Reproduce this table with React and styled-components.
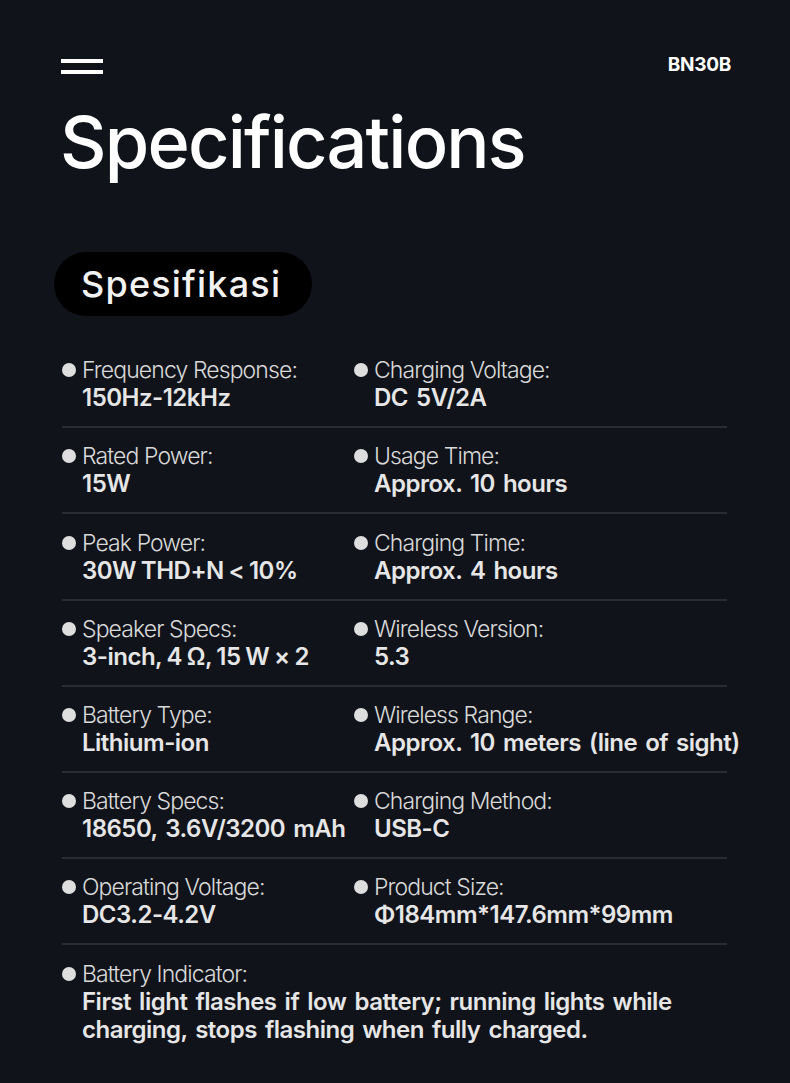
import styled, { createGlobalStyle } from 'styled-components';

const GlobalStyle = createGlobalStyle`
    html, body {
        margin: 0;
        padding: 0;
        background: #10131a;
    }
    * {
        box-sizing: border-box;
    }
`

const Page = styled.div`
    width: 790px;
    min-height: 1083px;
    background: #10131a;
    padding: 59px 59px 0 61px;
    font-family: Inter, "Liberation Sans", sans-serif;
    color: #e4e4e4;
`

const Header = styled.div`
    display: flex;
    align-items: flex-start;
    justify-content: space-between;
    height: 15px;
`

const Burger = styled.div`
    display: flex;
    flex-direction: column;
    gap: 7px;
    width: 42px;

    span {
        display: block;
        height: 4px;
        background: #fff;
    }
`

const Model = styled.div`
    font-size: 19px;
    font-weight: 700;
    color: #fff;
    line-height: 12px;
    letter-spacing: -0.3px;
`

const Title = styled.h1`
    margin: 26px 0 0 -1px;
    font-size: 72px;
    font-weight: 500;
    line-height: 84px;
    color: #fff;
    letter-spacing: -1.8px;
`

const Pill = styled.div`
    display: inline-flex;
    align-items: center;
    height: 64px;
    margin: 68px 0 0 -7px;
    padding: 0 31px 0 27px;
    border-radius: 32px;
    background: #000;
    font-size: 36px;
    font-weight: 500;
    color: #f2f2f2;
    letter-spacing: 1.2px;
`

const SpecList = styled.div`
    width: 665px;
    margin: 26px 0 0 1px;
`

const Row = styled.div`
    display: grid;
    grid-template-columns: ${p => p.$full ? '1fr' : '292px 1fr'};
    padding: 14.2px 0 14px;
    border-bottom: ${p => p.$last ? 'none' : '2px solid #2a2c31'};
`

const Item = styled.div`
    display: grid;
    grid-template-columns: 14px auto;
    column-gap: 6px;
    white-space: ${p => p.$wrap ? 'normal' : 'nowrap'};
`

const Dot = styled.span`
    width: 14px;
    height: 14px;
    border-radius: 50%;
    background: #dedede;
    margin-top: 7px;
`

const Label = styled.div`
    font-size: 23px;
    font-weight: 300;
    line-height: 28px;
    color: #d9d9d9;
    letter-spacing: -0.9px;
`

const Value = styled.div`
    grid-column: 2;
    font-size: 24px;
    font-weight: 600;
    line-height: 28px;
    color: #e6e6e6;
    letter-spacing: -0.5px;
    word-spacing: ${p => p.$tight ? '-0.8px' : '2.5px'};
    max-width: ${p => p.$max || 'none'};
`

const specs = [
    [['Frequency Response:', '150Hz-12kHz'], ['Charging Voltage:', 'DC 5V/2A']],
    [['Rated Power:', '15W'], ['Usage Time:', 'Approx. 10 hours']],
    [['Peak Power:', '30W THD+N < 10%', true], ['Charging Time:', 'Approx. 4 hours']],
    [['Speaker Specs:', '3-inch, 4 Ω, 15 W × 2', true], ['Wireless Version:', '5.3']],
    [['Battery Type:', 'Lithium-ion'], ['Wireless Range:', 'Approx. 10 meters (line of sight)']],
    [['Battery Specs:', '18650, 3.6V/3200 mAh'], ['Charging Method:', 'USB-C']],
    [['Operating Voltage:', 'DC3.2-4.2V'], ['Product Size:', 'Φ184mm*147.6mm*99mm']],
]

const Spec = ({ label, value, tight }) => (
    <Item>
        <Dot />
        <Label>{label}</Label>
        <Value $tight={tight}>{value}</Value>
    </Item>
)

const App = () => (
    <Page>
        <GlobalStyle />
        <Header>
            <Burger><span /><span /></Burger>
            <Model>BN30B</Model>
        </Header>
        <Title>Specifications</Title>
        <Pill>Spesifikasi</Pill>
        <SpecList>
            {specs.map((row, i) => (
                <Row key={i}>
                    {row.map(([label, value, tight]) => (
                        <Spec key={label} label={label} value={value} tight={tight} />
                    ))}
                </Row>
            ))}
            <Row $full $last>
                <Item $wrap>
                    <Dot />
                    <Label>Battery Indicator:</Label>
                    <Value $max="620px">
                        First light flashes if low battery; running lights while charging, stops flashing when fully charged.
                    </Value>
                </Item>
            </Row>
        </SpecList>
    </Page>
)

export default App
